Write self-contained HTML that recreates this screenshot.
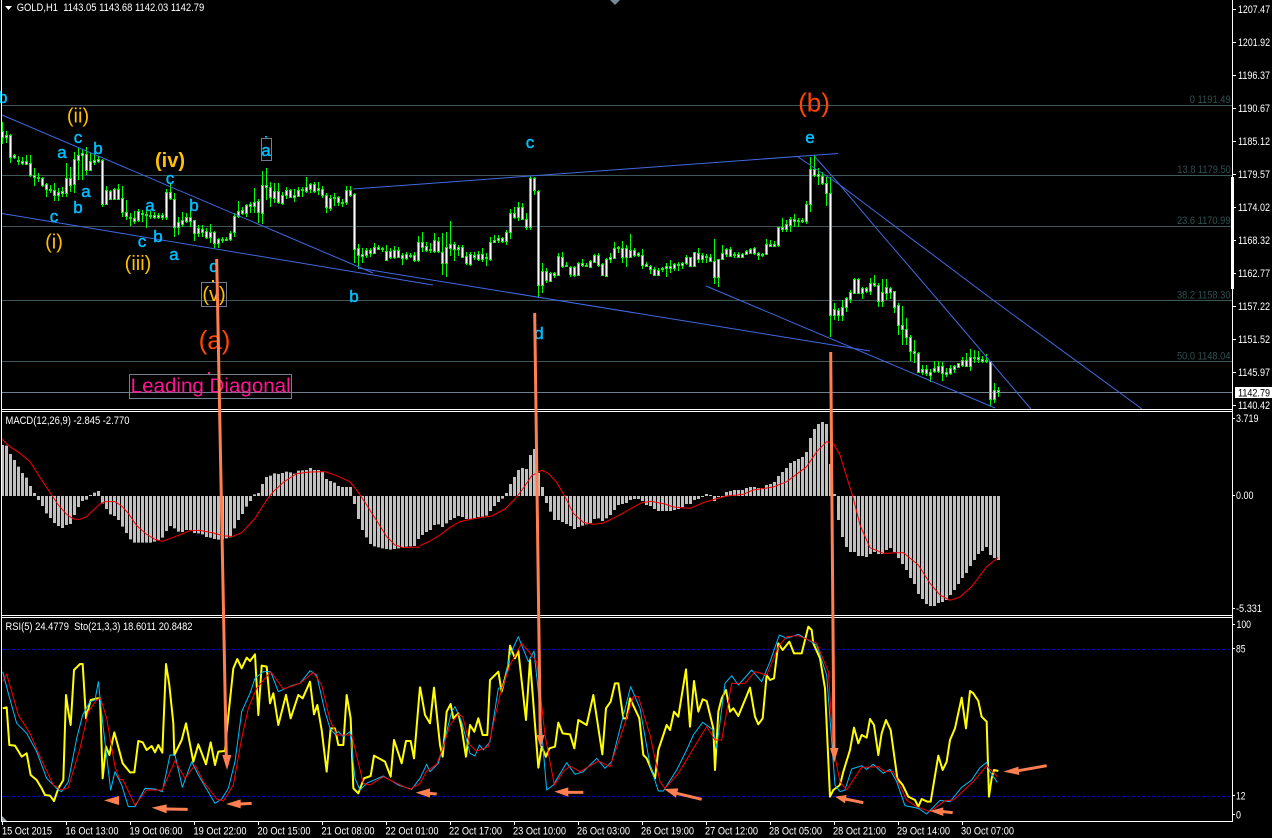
<!DOCTYPE html>
<html><head><meta charset="utf-8"><title>GOLD,H1</title>
<style>
html,body{margin:0;padding:0;background:#000;width:1272px;height:838px;overflow:hidden}
svg{display:block;font-family:"Liberation Sans",Arial,sans-serif}
.ax{fill:#fff;font-size:11px}
.fib{fill:#2f4f4f;font-size:11px}
.bl{fill:#00bfff;stroke:#00bfff;stroke-width:.45px;font-size:17px;text-anchor:middle}
.gd{fill:#ffc000;font-size:20px;text-anchor:middle}
.or{fill:#ff4500;font-size:26px;text-anchor:middle}
</style></head><body>
<svg width="1272" height="838" viewBox="0 0 1272 838" xmlns="http://www.w3.org/2000/svg">
<rect width="1272" height="838" fill="#000"/>
<defs><clipPath id="top"><rect x="0" y="0" width="1232" height="409"/></clipPath></defs>

<!-- fib lines -->
<g stroke="#3d5757" stroke-width="1" fill="none">
<path d="M2 105.5H1232M2 175.5H1232M2 226.5H1232M2 300.5H1232M2 361.5H1232"/>
</g>
<path d="M2 392.5H1232" stroke="#708090" stroke-width="1"/>
<g class="fib">
<text x="1189.7" y="103" textLength="41" lengthAdjust="spacingAndGlyphs">0 1191.49</text>
<text x="1177.3" y="173" textLength="53.5" lengthAdjust="spacingAndGlyphs">13.8 1179.50</text>
<text x="1177" y="224" textLength="53.5" lengthAdjust="spacingAndGlyphs">23.6 1170.99</text>
<text x="1177" y="298.5" textLength="53.5" lengthAdjust="spacingAndGlyphs">38.2 1158.30</text>
<text x="1177" y="359.5" textLength="53.5" lengthAdjust="spacingAndGlyphs">50.0 1148.04</text>
</g>

<!-- candle wicks -->
<path fill="none" stroke="#0f0" stroke-width="1" d="M2.5 122V144M6.5 131V143M10.5 134V163M14.5 154V159M18.5 156V165M22.5 157V165M26.5 155V165M30.5 155V177M34.5 168V186M38.5 173V182M42.5 177V187M46.5 183V197M50.5 185V193M54.5 183V201M58.5 188V201M62.5 187V197M66.5 163V197M70.5 167V192M74.5 152V193M78.5 148V180M82.5 150V180M86.5 147V175M90.5 153V171M94.5 155V165M98.5 156V163M102.5 159V207M106.5 186V205M110.5 190V200M114.5 188V200M118.5 184V200M122.5 186V217M126.5 200V220M130.5 213V226M134.5 211V224M138.5 209V222M142.5 210V222M146.5 209V228M150.5 211V219M154.5 212V219M158.5 213V219M162.5 213V220M166.5 189V220M170.5 183V200M174.5 193V237M178.5 217V235M182.5 212V227M186.5 213V223M190.5 207V227M194.5 220V241M198.5 225V237M202.5 225V237M206.5 228V239M210.5 224V243M214.5 231V248M218.5 238V248M222.5 237V243M226.5 237V241M230.5 231V241M234.5 213V237M238.5 201V218M242.5 207V215M246.5 204V217M250.5 202V213M254.5 188V213M258.5 199V223M262.5 171V224M266.5 168V200M270.5 182V207M274.5 183V203M278.5 183V204M282.5 192V205M286.5 187V199M290.5 189V198M294.5 189V202M298.5 187V197M302.5 187V197M306.5 177V193M310.5 183V193M314.5 182V193M318.5 182V195M322.5 186V198M326.5 193V213M330.5 195V211M334.5 193V206M338.5 196V206M342.5 199V207M346.5 186V205M350.5 186V197M354.5 193V263M358.5 244V269M362.5 248V263M366.5 248V258M370.5 248V257M374.5 243V253M378.5 245V250M382.5 247V252M386.5 245V261M390.5 248V259M394.5 246V259M398.5 247V257M402.5 253V265M406.5 252V260M410.5 253V258M414.5 252V262M418.5 236V262M422.5 232V252M426.5 242V252M430.5 243V253M434.5 233V253M438.5 237V253M442.5 233V275M446.5 232V277M450.5 221V256M454.5 242V261M458.5 245V256M462.5 245V258M466.5 252V265M470.5 252V266M474.5 252V260M478.5 251V261M482.5 248V262M486.5 253V266M490.5 237V261M494.5 235V243M498.5 235V243M502.5 237V243M506.5 230V245M510.5 209V239M514.5 207V219M518.5 202V221M522.5 203V220M526.5 213V230M530.5 176V230M534.5 177V195M538.5 190V297M542.5 263V293M546.5 268V283M550.5 272V282M554.5 272V278M558.5 253V275M562.5 252V268M566.5 262V267M570.5 266V277M574.5 266V277M578.5 262V276M582.5 259V267M586.5 263V267M590.5 260V268M594.5 254V263M598.5 253V267M602.5 263V275M606.5 258V277M610.5 253V263M614.5 242V258M618.5 246V253M622.5 241V263M626.5 245V267M630.5 234V258M634.5 248V257M638.5 252V257M642.5 249V269M646.5 262V267M650.5 265V274M654.5 267V275M658.5 268V275M662.5 267V272M666.5 263V277M670.5 260V273M674.5 263V271M678.5 262V271M682.5 262V269M686.5 255V265M690.5 257V267M694.5 252V267M698.5 248V263M702.5 253V263M706.5 254V263M710.5 254V262M714.5 239V284M718.5 259V287M722.5 245V260M726.5 248V257M730.5 247V257M734.5 252V258M738.5 252V258M742.5 253V257M746.5 250V255M750.5 248V254M754.5 247V255M758.5 252V260M762.5 253V257M766.5 239V255M770.5 240V247M774.5 241V247M778.5 227V247M782.5 218V232M786.5 220V232M790.5 217V232M794.5 214V227M798.5 218V227M802.5 218V223M806.5 201V224M810.5 157V212M814.5 155V177M818.5 168V185M822.5 172V185M826.5 177V206M830.5 177V337M834.5 303V320M838.5 308V321M842.5 300V321M846.5 297V312M850.5 290V303M854.5 278V293M858.5 278V294M862.5 287V299M866.5 287V293M870.5 278V295M874.5 275V287M878.5 283V307M882.5 279V307M886.5 279V300M890.5 287V299M894.5 291V313M898.5 303V335M902.5 306V345M906.5 318V345M910.5 335V361M914.5 340V363M918.5 352V373M922.5 365V375M926.5 365V376M930.5 369V382M934.5 361V373M938.5 361V373M942.5 362V381M946.5 368V377M950.5 365V375M954.5 365V373M958.5 363V368M962.5 357V367M966.5 353V367M970.5 349V371M974.5 350V363M978.5 351V363M982.5 356V363M986.5 354V363M990.5 361V406M994.5 383V403M998.5 387V397"/>
<!-- candle bodies -->
<path fill="#fff" stroke="#0f0" stroke-width="1" d="M1.5 131.5h2v6h-2zM5.5 135.5h2v2h-2zM9.5 135.5h2v22h-2zM13.5 155.5h2v2h-2zM17.5 160.5h2v1h-2zM21.5 161.5h2v2h-2zM25.5 161.5h2v3h-2zM29.5 163.5h2v12h-2zM33.5 175.5h2v2h-2zM37.5 177.5h2v1h-2zM41.5 178.5h2v7h-2zM45.5 184.5h2v5h-2zM49.5 189.5h2v1h-2zM53.5 190.5h2v5h-2zM57.5 192.5h2v3h-2zM61.5 191.5h2v2h-2zM65.5 178.5h2v15h-2zM69.5 178.5h2v7h-2zM73.5 159.5h2v25h-2zM77.5 155.5h2v5h-2zM81.5 153.5h2v2h-2zM85.5 154.5h2v16h-2zM89.5 161.5h2v9h-2zM93.5 160.5h2v2h-2zM97.5 159.5h2v2h-2zM101.5 160.5h2v44h-2zM105.5 190.5h2v14h-2zM109.5 191.5h2v8h-2zM113.5 189.5h2v10h-2zM117.5 189.5h2v10h-2zM121.5 198.5h2v14h-2zM125.5 212.5h2v4h-2zM129.5 217.5h2v1h-2zM133.5 218.5h2v3h-2zM137.5 211.5h2v9h-2zM141.5 213.5h2v1h-2zM145.5 214.5h2v1h-2zM149.5 215.5h2v1h-2zM153.5 215.5h2v2h-2zM157.5 215.5h2v2h-2zM161.5 215.5h2v2h-2zM165.5 192.5h2v25h-2zM169.5 192.5h2v6h-2zM173.5 199.5h2v28h-2zM177.5 222.5h2v5h-2zM181.5 220.5h2v4h-2zM185.5 217.5h2v4h-2zM189.5 217.5h2v4h-2zM193.5 220.5h2v13h-2zM197.5 228.5h2v5h-2zM201.5 229.5h2v3h-2zM205.5 231.5h2v6h-2zM209.5 232.5h2v5h-2zM213.5 232.5h2v11h-2zM217.5 239.5h2v4h-2zM221.5 239.5h2v1h-2zM225.5 239.5h2v1h-2zM229.5 233.5h2v6h-2zM233.5 216.5h2v16h-2zM237.5 211.5h2v5h-2zM241.5 210.5h2v3h-2zM245.5 205.5h2v8h-2zM249.5 204.5h2v2h-2zM253.5 202.5h2v4h-2zM257.5 201.5h2v11h-2zM261.5 185.5h2v28h-2zM265.5 185.5h2v2h-2zM269.5 187.5h2v10h-2zM273.5 191.5h2v7h-2zM277.5 191.5h2v11h-2zM281.5 195.5h2v8h-2zM285.5 190.5h2v5h-2zM289.5 190.5h2v7h-2zM293.5 195.5h2v2h-2zM297.5 190.5h2v6h-2zM301.5 189.5h2v1h-2zM305.5 187.5h2v4h-2zM309.5 184.5h2v5h-2zM313.5 184.5h2v7h-2zM317.5 188.5h2v2h-2zM321.5 189.5h2v6h-2zM325.5 195.5h2v12h-2zM329.5 198.5h2v10h-2zM333.5 197.5h2v1h-2zM337.5 197.5h2v5h-2zM341.5 202.5h2v1h-2zM345.5 190.5h2v12h-2zM349.5 190.5h2v5h-2zM353.5 194.5h2v55h-2zM357.5 248.5h2v7h-2zM361.5 254.5h2v2h-2zM365.5 250.5h2v5h-2zM369.5 250.5h2v3h-2zM373.5 247.5h2v6h-2zM377.5 247.5h2v2h-2zM381.5 248.5h2v1h-2zM385.5 251.5h2v9h-2zM389.5 251.5h2v6h-2zM393.5 250.5h2v7h-2zM397.5 250.5h2v7h-2zM401.5 255.5h2v3h-2zM405.5 254.5h2v4h-2zM409.5 255.5h2v1h-2zM413.5 255.5h2v5h-2zM417.5 242.5h2v18h-2zM421.5 242.5h2v5h-2zM425.5 246.5h2v4h-2zM429.5 249.5h2v1h-2zM433.5 240.5h2v11h-2zM437.5 241.5h2v10h-2zM441.5 252.5h2v11h-2zM445.5 247.5h2v16h-2zM449.5 244.5h2v4h-2zM453.5 244.5h2v5h-2zM457.5 247.5h2v2h-2zM461.5 247.5h2v10h-2zM465.5 256.5h2v7h-2zM469.5 254.5h2v10h-2zM473.5 255.5h2v2h-2zM477.5 254.5h2v5h-2zM481.5 254.5h2v5h-2zM485.5 257.5h2v1h-2zM489.5 242.5h2v17h-2zM493.5 240.5h2v2h-2zM497.5 238.5h2v2h-2zM501.5 238.5h2v3h-2zM505.5 232.5h2v9h-2zM509.5 213.5h2v19h-2zM513.5 213.5h2v4h-2zM517.5 207.5h2v10h-2zM521.5 207.5h2v12h-2zM525.5 219.5h2v8h-2zM529.5 178.5h2v49h-2zM533.5 178.5h2v12h-2zM537.5 191.5h2v94h-2zM541.5 271.5h2v14h-2zM545.5 271.5h2v9h-2zM549.5 273.5h2v8h-2zM553.5 273.5h2v2h-2zM557.5 256.5h2v19h-2zM561.5 257.5h2v9h-2zM565.5 265.5h2v1h-2zM569.5 267.5h2v7h-2zM573.5 267.5h2v8h-2zM577.5 263.5h2v12h-2zM581.5 263.5h2v2h-2zM585.5 265.5h2v1h-2zM589.5 261.5h2v6h-2zM593.5 255.5h2v7h-2zM597.5 255.5h2v10h-2zM601.5 264.5h2v11h-2zM605.5 259.5h2v17h-2zM609.5 257.5h2v2h-2zM613.5 248.5h2v10h-2zM617.5 247.5h2v1h-2zM621.5 248.5h2v9h-2zM625.5 248.5h2v9h-2zM629.5 250.5h2v7h-2zM633.5 250.5h2v5h-2zM637.5 253.5h2v2h-2zM641.5 255.5h2v10h-2zM645.5 264.5h2v2h-2zM649.5 266.5h2v3h-2zM653.5 269.5h2v6h-2zM657.5 270.5h2v5h-2zM661.5 268.5h2v1h-2zM665.5 266.5h2v2h-2zM669.5 266.5h2v2h-2zM673.5 264.5h2v4h-2zM677.5 264.5h2v1h-2zM681.5 263.5h2v2h-2zM685.5 257.5h2v6h-2zM689.5 257.5h2v9h-2zM693.5 252.5h2v14h-2zM697.5 253.5h2v6h-2zM701.5 255.5h2v4h-2zM705.5 256.5h2v1h-2zM709.5 257.5h2v4h-2zM713.5 261.5h2v16h-2zM717.5 259.5h2v18h-2zM721.5 253.5h2v6h-2zM725.5 249.5h2v5h-2zM729.5 249.5h2v7h-2zM733.5 254.5h2v1h-2zM737.5 254.5h2v3h-2zM741.5 254.5h2v3h-2zM745.5 251.5h2v3h-2zM749.5 249.5h2v4h-2zM753.5 248.5h2v5h-2zM757.5 253.5h2v2h-2zM761.5 254.5h2v1h-2zM765.5 244.5h2v10h-2zM769.5 244.5h2v2h-2zM773.5 244.5h2v2h-2zM777.5 227.5h2v18h-2zM781.5 227.5h2v2h-2zM785.5 224.5h2v5h-2zM789.5 219.5h2v6h-2zM793.5 219.5h2v2h-2zM797.5 220.5h2v1h-2zM801.5 220.5h2v1h-2zM805.5 204.5h2v17h-2zM809.5 169.5h2v35h-2zM813.5 169.5h2v6h-2zM817.5 174.5h2v2h-2zM821.5 176.5h2v7h-2zM825.5 183.5h2v10h-2zM829.5 193.5h2v122h-2zM833.5 309.5h2v6h-2zM837.5 310.5h2v5h-2zM841.5 307.5h2v8h-2zM845.5 298.5h2v9h-2zM849.5 292.5h2v7h-2zM853.5 279.5h2v14h-2zM857.5 279.5h2v14h-2zM861.5 288.5h2v5h-2zM865.5 288.5h2v3h-2zM869.5 283.5h2v8h-2zM873.5 283.5h2v2h-2zM877.5 285.5h2v16h-2zM881.5 292.5h2v9h-2zM885.5 287.5h2v6h-2zM889.5 288.5h2v4h-2zM893.5 291.5h2v16h-2zM897.5 305.5h2v20h-2zM901.5 325.5h2v4h-2zM905.5 329.5h2v8h-2zM909.5 337.5h2v14h-2zM913.5 351.5h2v2h-2zM917.5 353.5h2v19h-2zM921.5 369.5h2v3h-2zM925.5 369.5h2v4h-2zM929.5 372.5h2v3h-2zM933.5 368.5h2v3h-2zM937.5 366.5h2v5h-2zM941.5 366.5h2v7h-2zM945.5 372.5h2v2h-2zM949.5 368.5h2v5h-2zM953.5 366.5h2v3h-2zM957.5 363.5h2v4h-2zM961.5 360.5h2v5h-2zM965.5 360.5h2v6h-2zM969.5 357.5h2v9h-2zM973.5 357.5h2v1h-2zM977.5 357.5h2v2h-2zM981.5 359.5h2v2h-2zM985.5 360.5h2v1h-2zM989.5 361.5h2v38h-2zM993.5 390.5h2v9h-2zM997.5 390.5h2v2h-2z"/>

<!-- trend lines -->
<g clip-path="url(#top)" fill="none" stroke="#4169e1" stroke-width="1">
<path d="M2 115L373 273"/>
<path d="M2 213.5L433 285"/>
<path d="M358 268L870 351"/>
<path d="M353 189L838 153.5"/>
<path d="M706 286L995 408"/>
<path d="M798 157L840 185L993 300L1142 409"/>
<path d="M815 157L840 185L875 226.7L938 300L1031 409"/>
</g>

<!-- objects -->
<rect x="201.5" y="282.5" width="25" height="24" fill="none" stroke="#708090"/>
<rect x="261.5" y="138.5" width="10" height="22" fill="none" stroke="#708090"/>
<rect x="129.5" y="374.5" width="162" height="24" fill="none" stroke="#708090"/>
<rect x="212" y="280" width="2" height="2" fill="#ffc000"/>
<rect x="265" y="136" width="2" height="1.5" fill="#00bfff"/>
<rect x="208" y="372" width="2" height="2" fill="#ff1493"/>

<g>
<text class="bl" x="-2" y="103" style="text-anchor:start">b</text>
<text class="bl" x="62" y="158">a</text>
<text class="bl" x="78" y="143">c</text>
<text class="bl" x="98" y="154">b</text>
<text class="bl" x="86" y="197">a</text>
<text class="bl" x="78" y="213">b</text>
<text class="bl" x="54" y="222">c</text>
<text class="bl" x="150" y="211">a</text>
<text class="bl" x="194" y="211">b</text>
<text class="bl" x="170" y="184">c</text>
<text class="bl" x="158" y="242">b</text>
<text class="bl" x="142" y="247">c</text>
<text class="bl" x="174" y="260">a</text>
<text class="bl" x="214" y="272">d</text>
<text class="bl" x="266" y="156">a</text>
<text class="bl" x="354" y="302">b</text>
<text class="bl" x="530" y="148">c</text>
<text class="bl" x="810" y="143">e</text>
<text class="bl" x="539" y="339">d</text>
<text class="gd" x="78" y="122.5">(ii)</text>
<text class="gd" x="54" y="248.5">(i)</text>
<text class="gd" x="138" y="270">(iii)</text>
<text class="gd" x="170" y="167" font-weight="bold">(iv)</text>
<text class="gd" x="214" y="301">(v)</text>
<text class="or" x="214.5" y="349">(a)</text>
<text class="or" x="814" y="111.5">(b)</text>
<text x="130.7" y="392.7" fill="#ff1493" font-size="20.5" textLength="160" lengthAdjust="spacingAndGlyphs">Leading Diagonal</text>
</g>

<!-- MACD histogram -->
<g transform="translate(0,405) scale(.33333)">
<path fill="none" stroke="#c0c0c0" stroke-width="9" d="M7.5 273V120M19.5 273V122M31.5 273V147M43.5 273V165M55.5 273V185M67.5 273V204M79.5 273V218M91.5 273V243M103.5 273V264M115.5 273V285M127.5 273V303M139.5 273V325M151.5 273V339M163.5 273V354M175.5 273V363M187.5 273V369M199.5 273V360M211.5 273V357M223.5 273V330M235.5 273V306M247.5 273V288M259.5 273V284M271.5 273V270M283.5 273V263M295.5 273V258M307.5 273V296M319.5 273V312M331.5 273V328M343.5 273V333M355.5 273V345M367.5 273V365M379.5 273V384M391.5 273V403M403.5 273V413M415.5 273V413M427.5 273V413M439.5 273V413M451.5 273V413M463.5 273V410M475.5 273V405M487.5 273V398M499.5 273V378M511.5 273V363M523.5 273V370M535.5 273V380M547.5 273V381M559.5 273V375M571.5 273V375M583.5 273V384M595.5 273V385M607.5 273V388M619.5 273V396M631.5 273V398M643.5 273V402M655.5 273V404M667.5 273V403M679.5 273V400M691.5 273V397M703.5 273V370M715.5 273V345M727.5 273V327M739.5 273V305M751.5 273V288M763.5 273V268M775.5 273V264M787.5 273V237M799.5 273V216M811.5 273V212M823.5 273V205M835.5 273V207M847.5 273V204M859.5 273V200M871.5 273V202M883.5 273V206M895.5 273V197M907.5 273V196M919.5 273V195M931.5 273V189M943.5 273V195M955.5 273V195M967.5 273V200M979.5 273V222M991.5 273V228M1003.5 273V233M1015.5 273V243M1027.5 273V246M1039.5 273V246M1051.5 273V246M1063.5 273V297M1075.5 273V342M1087.5 273V375M1099.5 273V397M1111.5 273V417M1123.5 273V424M1135.5 273V427M1147.5 273V430M1159.5 273V432M1171.5 273V434M1183.5 273V432M1195.5 273V430M1207.5 273V428M1219.5 273V425M1231.5 273V424M1243.5 273V423M1255.5 273V402M1267.5 273V390M1279.5 273V381M1291.5 273V375M1303.5 273V360M1315.5 273V358M1327.5 273V366M1339.5 273V355M1351.5 273V345M1363.5 273V339M1375.5 273V333M1387.5 273V336M1399.5 273V342M1411.5 273V342M1423.5 273V340M1435.5 273V336M1447.5 273V335M1459.5 273V332M1471.5 273V318M1483.5 273V303M1495.5 273V291M1507.5 273V281M1519.5 273V264M1531.5 273V237M1543.5 273V216M1555.5 273V195M1567.5 273V189M1579.5 273V192M1591.5 273V150M1603.5 273V132M1615.5 273V204M1627.5 273V246M1639.5 273V294M1651.5 273V320M1663.5 273V345M1675.5 273V345M1687.5 273V351M1699.5 273V357M1711.5 273V363M1723.5 273V372M1735.5 273V366M1747.5 273V362M1759.5 273V358M1771.5 273V354M1783.5 273V342M1795.5 273V340M1807.5 273V348M1819.5 273V340M1831.5 273V330M1843.5 273V315M1855.5 273V300M1867.5 273V297M1879.5 273V294M1891.5 273V285M1903.5 273V282M1915.5 273V282M1927.5 273V288M1939.5 273V300M1951.5 273V303M1963.5 273V312M1975.5 273V318M1987.5 273V318M1999.5 273V318M2011.5 273V318M2023.5 273V315M2035.5 273V312M2047.5 273V306M2059.5 273V297M2071.5 273V297M2083.5 273V285M2095.5 273V282M2107.5 273V276M2119.5 273V267M2131.5 273V270M2143.5 273V288M2155.5 273V276M2167.5 273V276M2179.5 273V261M2191.5 273V258M2203.5 273V255M2215.5 273V255M2227.5 273V255M2239.5 273V249M2251.5 273V246M2263.5 273V246M2275.5 273V249M2287.5 273V249M2299.5 273V240M2311.5 273V237M2323.5 273V231M2335.5 273V213M2347.5 273V201M2359.5 273V189M2371.5 273V174M2383.5 273V168M2395.5 273V162M2407.5 273V156M2419.5 273V141M2431.5 273V99M2443.5 273V72M2455.5 273V57M2467.5 273V51M2479.5 273V57M2491.5 273V177M2503.5 273V267M2515.5 273V345M2527.5 273V396M2539.5 273V426M2551.5 273V441M2563.5 273V441M2575.5 273V453M2587.5 273V453M2599.5 273V456M2611.5 273V447M2623.5 273V441M2635.5 273V447M2647.5 273V447M2659.5 273V435M2671.5 273V429M2683.5 273V441M2695.5 273V459M2707.5 273V477M2719.5 273V495M2731.5 273V519M2743.5 273V537M2755.5 273V567M2767.5 273V582M2779.5 273V597M2791.5 273V603M2803.5 273V603M2815.5 273V594M2827.5 273V591M2839.5 273V585M2851.5 273V570M2863.5 273V555M2875.5 273V537M2887.5 273V519M2899.5 273V504M2911.5 273V483M2923.5 273V465M2935.5 273V447M2947.5 273V438M2959.5 273V426M2971.5 273V450M2983.5 273V459M2995.5 273V465"/>
<g fill="none" stroke="#f00" stroke-width="3" stroke-linejoin="round">
<path d="M5 102L30 125L60 145L90 170L125 225L155 270L175 300L200 328L220 342L240 343L260 335L280 315L300 297L315 290L345 290L365 303L385 325L410 362L440 388L465 403L487 409L520 397L570 377L600 376L640 384L670 392L695 395L725 383L765 340L800 285L820 260L850 232L890 206L930 201L975 200L1010 212L1050 230L1075 262L1100 300L1130 347L1160 395L1185 420L1210 428L1260 426"/>
<path transform="translate(1260,0)" d="M0 422L30 408L60 390L90 367L120 350L150 343L180 338L215 333L255 312L285 282L310 250L335 212L365 196L385 205L410 232L435 275L460 325L490 352L520 358L550 354L590 335L625 315L665 293L695 289L735 297L760 306L810 310L850 293L890 281L920 273L970 268L1000 255L1060 246L1100 230L1160 185L1190 140L1220 110L1240 115L1260 150"/>
<path transform="translate(2520,0)" d="M0 150L20 215L40 280L60 360L90 428L130 445L190 443L235 480L270 535L300 570L330 586L360 576L395 545L440 485L475 457"/>
</g>
</g>

<!-- RSI pane levels -->
<path d="M2 649.5H1232M2 796.5H1232" stroke="#0000e6" stroke-width="1" stroke-dasharray="3 2" fill="none"/>

<!-- RSI lines -->
<g transform="translate(0,615) scale(.33333)" fill="none" stroke-linejoin="round">
<g stroke="#ff0" stroke-width="6">
<path d="M8 280L20 277L28 390L45 392L65 425L80 415L92 480L110 495L125 520L135 540L150 542L162 558L175 520L190 495L198 240L205 290L212 330L222 165L240 147L248 147L258 310L272 255L292 250L300 250L308 490L318 395L328 420L343 352L368 445L390 472L403 472L415 378L428 382L440 405L455 393L465 412L475 390L487 413L498 147L508 210L520 325L523 420L545 375L558 325L580 440L595 388L618 448L632 382L645 450L655 410L675 408L680 350L700 160L712 132L725 160L740 128L750 138L765 118L775 300L785 152L800 155L810 265L820 235L835 330L858 240L872 310L895 240L908 250L930 200L942 298L952 270L965 345L980 470L992 340L1005 340L1015 390L1030 390L1040 240L1052 310L1060 520L1075 535L1092 490L1112 483L1122 422L1155 440L1172 485L1182 375L1205 445L1218 378L1232 378L1242 430L1260 215"/>
<path transform="translate(1260,0)" d="M0 215L15 300L30 325L42 218L60 390L68 425L80 290L92 267L100 310L115 295L125 340L138 425L150 330L163 350L175 310L188 360L202 360L210 195L235 170L245 230L265 150L270 92L285 130L295 108L318 315L330 135L355 458L365 395L378 425L388 400L405 395L415 323L428 355L450 358L463 400L475 315L500 330L520 240L547 418L558 280L572 260L585 205L595 205L610 310L620 310L630 250L658 310L670 420L680 430L705 490L715 405L740 330L750 345L762 290L775 305L798 163L810 335L822 198L835 290L848 253L860 258L880 340L885 465L895 290L905 250L918 225L930 290L940 280L955 303L990 218L1005 305L1015 328L1028 310L1040 180L1050 195L1062 190L1075 85L1088 105L1108 80L1122 115L1145 115L1165 35L1175 45L1180 85L1200 130L1215 220L1230 545L1240 525L1260 510"/>
<path transform="translate(2520,0)" d="M0 510L10 470L30 405L42 338L55 385L65 360L80 368L90 312L102 330L115 420L125 355L138 315L152 345L172 490L188 510L205 545L225 555L235 575L245 552L262 560L272 560L295 422L308 465L320 440L330 375L345 340L365 248L378 340L390 228L400 235L415 258L425 305L440 320L447 545L455 490L462 465L475 468"/>
</g>
<g stroke="#00bfff" stroke-width="3">
<path d="M8 170L25 235L50 325L80 355L110 410L140 490L175 525L185 530L205 500L230 370L248 300L270 260L285 255L295 200L310 340L332 525L345 470L365 510L385 575L405 575L435 520L465 522L487 530L510 420L525 420L547 517L575 440L595 480L645 565L665 552L685 520L705 440L725 290L750 235L765 190L790 170L812 170L835 230L875 212L900 205L930 167L950 180L975 290L990 340L1005 358L1015 350L1030 365L1050 350L1065 490L1080 525L1100 505L1150 483L1195 510L1235 523L1260 490"/>
<path transform="translate(1260,0)" d="M0 490L20 448L30 470L55 445L70 390L95 290L105 275L125 320L150 415L165 423L178 390L190 405L210 380L235 220L250 215L270 120L295 65L325 140L342 108L355 230L380 525L400 510L440 443L465 478L490 470L530 430L555 460L575 440L632 215L660 280L690 450L715 528L730 528L770 465L800 405L820 360L848 322L880 345L890 400L915 205L935 182L955 210L995 165L1025 200L1050 140L1078 60L1100 70L1135 58L1190 90L1220 180L1245 510L1260 530"/>
<path transform="translate(2520,0)" d="M0 530L15 525L35 462L65 452L80 463L100 448L130 475L150 463L170 500L195 572L235 580L260 597L300 556L330 560L365 517L395 495L420 458L440 442L450 470L472 502"/>
</g>
<g stroke="#f00" stroke-width="3">
<path d="M8 200L20 177L55 300L90 355L120 425L160 510L185 525L205 518L240 400L265 290L290 255L302 250L320 310L345 455L360 495L368 493L405 570L440 525L487 525L525 437L555 490L585 450L610 500L650 552L670 558L700 510L725 370L745 280L770 220L812 170L850 222L900 205L940 172L965 210L990 315L1010 360L1055 360L1090 505L1110 510L1150 485L1190 505L1230 523L1260 505"/>
<path transform="translate(1260,0)" d="M0 505L20 468L50 448L70 395L90 330L115 298L128 305L150 390L170 408L205 395L240 240L270 150L305 85L335 120L350 140L375 360L403 510L430 470L450 453L480 470L535 438L570 455L610 340L640 245L655 245L690 360L720 500L735 520L775 475L860 335L885 375L905 375L935 205L975 205L1005 170L1040 180L1075 95L1100 65L1135 62L1190 85L1225 170L1240 400L1260 500"/>
<path transform="translate(2520,0)" d="M0 500L20 525L65 457L115 455L135 470L160 470L200 555L230 575L270 590L315 557L340 555L400 500L440 452L472 485"/>
</g>
</g>

<!-- spines -->
<g stroke="#fff" stroke-width="1" fill="none">
<path d="M1.5 0V821.5M1232.5 0V821.5"/>
<path d="M1 409.5H1233M1 411.5H1233M1 615.5H1233M1 617.5H1233M1 821.5H1233"/>
<path d="M1232 9.5h4M1232 42.5h4M1232 75.5h4M1232 108.5h4M1232 141.5h4M1232 174.5h4M1232 207.5h4M1232 240.5h4M1232 273.5h4M1232 306.5h4M1232 339.5h4M1232 372.5h4M1232 405.5h4M1232 418.5h3M1232 495.5h3M1232 608.5h3M1232 624.5h3M1232 648.5h3M1232 795.5h3M1232 814.5h3"/>
<path d="M2.5 821V825M66.5 821V825M130.5 821V825M194.5 821V825M258.5 821V825M322.5 821V825M386.5 821V825M450.5 821V825M514.5 821V825M578.5 821V825M642.5 821V825M706.5 821V825M770.5 821V825M834.5 821V825M898.5 821V825M962.5 821V825"/>
</g>
<rect x="1231" y="177" width="3" height="112" fill="#fff"/>

<!-- header markers -->
<path d="M5 6h7l-3.5 4z" fill="#fff"/>
<path d="M610 0h10l-5 5z" fill="#778899"/>
<path d="M2 816l5 5h-5z" fill="#a0a8b0"/>

<!-- orange arrows -->
<g stroke="#ff7f50" fill="#ff7f50" stroke-width="3" stroke-linejoin="round">
<path d="M216.7 259L226.3 757" fill="none"/>
<path d="M222.3 755H231.3L227 770Z" stroke="none"/>
<path d="M534.7 313L540.3 737" fill="none"/>
<path d="M536.5 735H544.5L540.7 748Z" stroke="none"/>
<path d="M830.7 352L834 750" fill="none"/>
<path d="M830 748H838.5L834.3 762.5Z" stroke="none"/>
</g>
<g transform="translate(0,615) scale(.33333)" stroke="#ff7f50" fill="#ff7f50" stroke-width="9">
<path d="M312 556L357 543V570Z" stroke="none"/>
<path d="M455 578L500 568V595Z" stroke="none"/><path d="M498 582L563 583"/>
<path d="M678 567L722 553V580Z" stroke="none"/><path d="M720 567L755 565"/>
<path d="M1247 533L1290 520V548Z" stroke="none"/><path d="M1288 535L1310 537"/>
<path d="M1663 530L1705 517V545Z" stroke="none"/><path d="M1703 532L1750 532"/>
<path d="M1992 522L2035 520L2028 548Z" stroke="none"/><path d="M2030 535L2105 553"/>
<path d="M2505 545L2540 540L2535 565Z" stroke="none"/><path d="M2536 552L2590 563"/>
<path d="M2790 588L2830 577V603Z" stroke="none"/><path d="M2828 590L2858 593"/>
<path d="M3010 470L3055 455L3058 480Z" stroke="none"/><path d="M3055 467L3140 452"/>
</g>

<!-- header text -->
<g class="ax">
<text x="16.7" y="11" textLength="187.5" lengthAdjust="spacingAndGlyphs">GOLD,H1&#160;&#160;1143.05 1143.68 1142.03 1142.79</text>
<text x="5.5" y="424" textLength="124" lengthAdjust="spacingAndGlyphs">MACD(12,26,9) -2.845 -2.770</text>
<text x="5.5" y="630" textLength="187" lengthAdjust="spacingAndGlyphs">RSI(5) 24.4779&#160;&#160;Sto(21,3,3) 18.6011 20.8482</text>
</g>

<!-- price axis -->
<g class="ax">
<text x="1238" y="13" textLength="32" lengthAdjust="spacingAndGlyphs">1207.47</text>
<text x="1238" y="46" textLength="32" lengthAdjust="spacingAndGlyphs">1201.92</text>
<text x="1238" y="79" textLength="32" lengthAdjust="spacingAndGlyphs">1196.37</text>
<text x="1238" y="112" textLength="32" lengthAdjust="spacingAndGlyphs">1190.67</text>
<text x="1238" y="145" textLength="32" lengthAdjust="spacingAndGlyphs">1185.12</text>
<text x="1238" y="178" textLength="32" lengthAdjust="spacingAndGlyphs">1179.57</text>
<text x="1238" y="211" textLength="32" lengthAdjust="spacingAndGlyphs">1174.02</text>
<text x="1238" y="244" textLength="32" lengthAdjust="spacingAndGlyphs">1168.32</text>
<text x="1238" y="277" textLength="32" lengthAdjust="spacingAndGlyphs">1162.77</text>
<text x="1238" y="310" textLength="32" lengthAdjust="spacingAndGlyphs">1157.22</text>
<text x="1238" y="343" textLength="32" lengthAdjust="spacingAndGlyphs">1151.52</text>
<text x="1238" y="376" textLength="32" lengthAdjust="spacingAndGlyphs">1145.97</text>
<text x="1238" y="409" textLength="32" lengthAdjust="spacingAndGlyphs">1140.42</text>
<text x="1236" y="422" textLength="22.5" lengthAdjust="spacingAndGlyphs">3.719</text>
<text x="1236" y="499" textLength="17.5" lengthAdjust="spacingAndGlyphs">0.00</text>
<text x="1236" y="612" textLength="26" lengthAdjust="spacingAndGlyphs">-5.331</text>
<text x="1236.5" y="628" textLength="14.5" lengthAdjust="spacingAndGlyphs">100</text>
<text x="1236" y="652.5" textLength="9.5" lengthAdjust="spacingAndGlyphs">85</text>
<text x="1236" y="799.5" textLength="9.5" lengthAdjust="spacingAndGlyphs">12</text>
<text x="1236" y="818.5" textLength="5" lengthAdjust="spacingAndGlyphs">0</text>
</g>
<rect x="1235" y="387" width="37" height="11" fill="#fff"/>
<text x="1238" y="396.5" font-size="11" fill="#000" textLength="32" lengthAdjust="spacingAndGlyphs">1142.79</text>

<!-- time axis -->
<g class="ax">
<text x="2" y="834.5" textLength="50" lengthAdjust="spacingAndGlyphs">15 Oct 2015</text>
<text x="65.5" y="834.5" textLength="53" lengthAdjust="spacingAndGlyphs">16 Oct 13:00</text>
<text x="129.5" y="834.5" textLength="53" lengthAdjust="spacingAndGlyphs">19 Oct 06:00</text>
<text x="193.5" y="834.5" textLength="53" lengthAdjust="spacingAndGlyphs">19 Oct 22:00</text>
<text x="257.5" y="834.5" textLength="53" lengthAdjust="spacingAndGlyphs">20 Oct 15:00</text>
<text x="321.5" y="834.5" textLength="53" lengthAdjust="spacingAndGlyphs">21 Oct 08:00</text>
<text x="385.5" y="834.5" textLength="53" lengthAdjust="spacingAndGlyphs">22 Oct 01:00</text>
<text x="449" y="834.5" textLength="53" lengthAdjust="spacingAndGlyphs">22 Oct 17:00</text>
<text x="513" y="834.5" textLength="53" lengthAdjust="spacingAndGlyphs">23 Oct 10:00</text>
<text x="577" y="834.5" textLength="53" lengthAdjust="spacingAndGlyphs">26 Oct 03:00</text>
<text x="641" y="834.5" textLength="53" lengthAdjust="spacingAndGlyphs">26 Oct 19:00</text>
<text x="705" y="834.5" textLength="53" lengthAdjust="spacingAndGlyphs">27 Oct 12:00</text>
<text x="769" y="834.5" textLength="53" lengthAdjust="spacingAndGlyphs">28 Oct 05:00</text>
<text x="833" y="834.5" textLength="53" lengthAdjust="spacingAndGlyphs">28 Oct 21:00</text>
<text x="897" y="834.5" textLength="53" lengthAdjust="spacingAndGlyphs">29 Oct 14:00</text>
<text x="961" y="834.5" textLength="53" lengthAdjust="spacingAndGlyphs">30 Oct 07:00</text>
</g>
</svg>
</body></html>
